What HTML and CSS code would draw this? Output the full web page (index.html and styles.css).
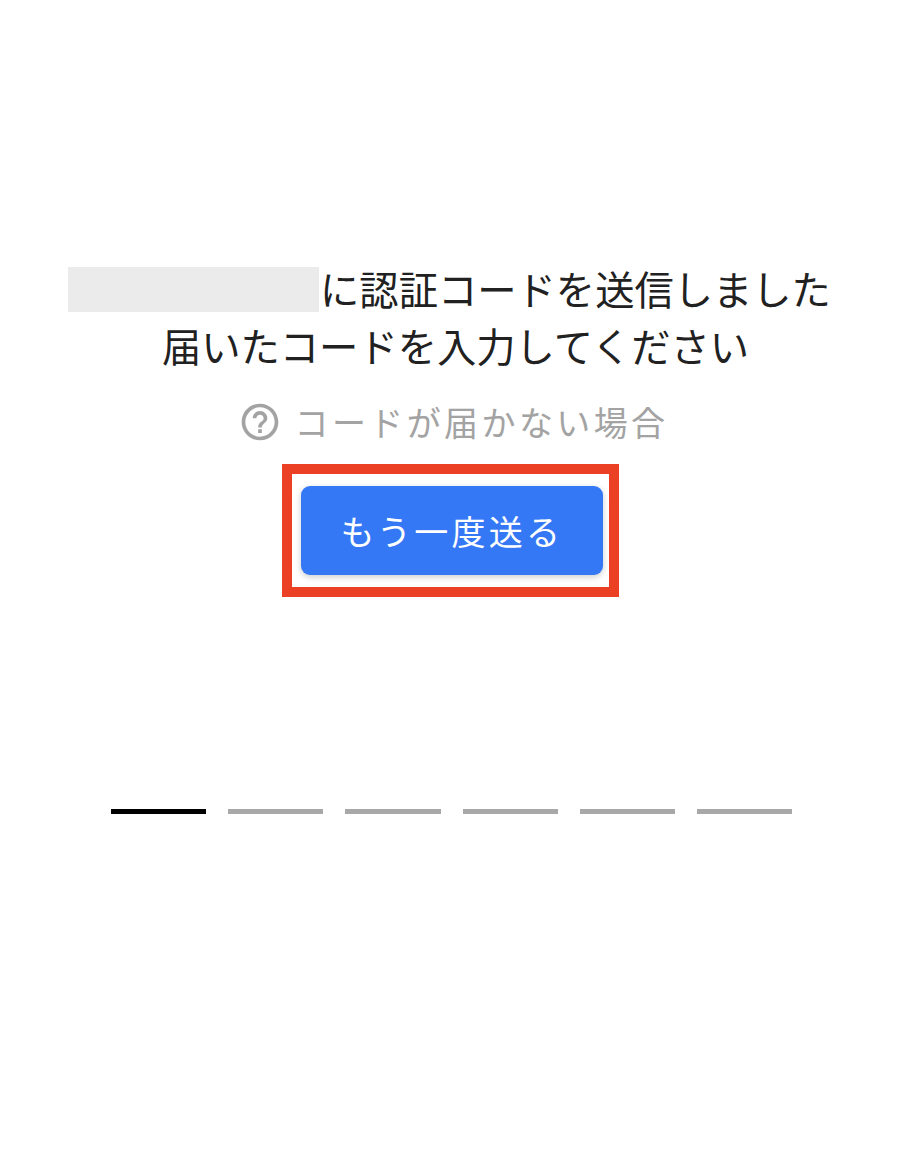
FILE: index.html
```html
<!DOCTYPE html>
<html lang="ja">
<head>
    <meta charset="UTF-8">
    <meta name="viewport" content="width=device-width, initial-scale=1.0">
    <title>認証コード</title>
    <link rel="stylesheet" href="styles.css">
</head>
<body>
    <div class="container">
        <div class="message">
            <div class="line first"><span class="masked"></span>に認証コードを送信しました</div>
            <div class="line second">届いたコードを入力してください</div>
        </div>
        <div class="help">
            <svg class="help-icon" viewBox="0 0 24 24" width="44" height="44" aria-hidden="true">
                <path fill="#a3a3a3" d="M11 18h2v-2h-2v2zm1-16C6.48 2 2 6.48 2 12s4.48 10 10 10 10-4.48 10-10S17.52 2 12 2zm0 18c-4.41 0-8-3.59-8-8s3.59-8 8-8 8 3.59 8 8-3.59 8-8 8zm0-14c-2.21 0-4 1.79-4 4h2c0-1.1.9-2 2-2s2 .9 2 2c0 2-3 1.75-3 5h2c0-2.25 3-2.5 3-5 0-2.21-1.79-4-4-4z"/>
            </svg>
            <span>コードが届かない場合</span>
        </div>
        <div class="highlight">
            <button class="resend-btn">もう一度送る</button>
        </div>
        <div class="steps">
            <div class="step active"></div>
            <div class="step"></div>
            <div class="step"></div>
            <div class="step"></div>
            <div class="step"></div>
            <div class="step"></div>
        </div>
    </div>
</body>
</html>
```

FILE: styles.css
```css
body {
    font-family: "Noto Sans CJK JP", "Noto Sans", sans-serif;
    background-color: #fff;
    margin: 0;
    padding: 0;
}

.container {
    display: flex;
    flex-direction: column;
    align-items: center;
    padding-top: 259px;
}

.message {
    text-align: center;
    font-size: 39.3px;
    line-height: 57px;
    color: #212121;
}

.line {
    white-space: nowrap;
}

.line.first {
    padding-right: 4px;
}

.line.second {
    padding-left: 8px;
}

.masked {
    display: inline-block;
    width: 251px;
    height: 45px;
    margin-right: 1px;
    background-color: #ebebeb;
    vertical-align: -7px;
}

.help {
    display: flex;
    align-items: center;
    gap: 13px;
    margin-top: 25px;
    margin-left: 3px;
    font-size: 34px;
    letter-spacing: 3.4px;
    line-height: 48px;
    color: #a3a3a3;
}

.highlight {
    box-sizing: border-box;
    width: 337px;
    height: 133px;
    margin-top: 18px;
    margin-right: 2px;
    padding: 12px 6px 0 9px;
    border: 10px solid #ec4024;
}

.resend-btn {
    display: block;
    width: 302px;
    height: 89px;
    padding: 0;
    background-color: #3578f6;
    color: #fff;
    border: none;
    border-radius: 9px;
    box-shadow: 0 2px 6px rgba(0, 0, 0, 0.2);
    font-family: inherit;
    font-size: 34px;
    letter-spacing: 3.3px;
}

.steps {
    display: flex;
    gap: 22px;
    margin-top: 212px;
}

.step {
    width: 95.2px;
    height: 5px;
    background-color: #a8a8a8;
}

.step.active {
    background-color: #000;
}
```
